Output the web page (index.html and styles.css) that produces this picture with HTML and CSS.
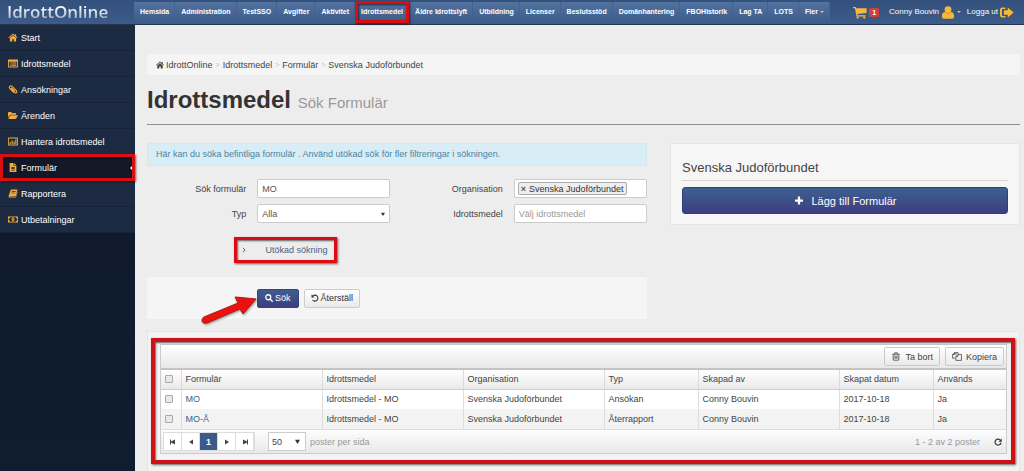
FILE: index.html
```html
<!DOCTYPE html>
<html lang="sv">
<head>
<meta charset="utf-8">
<title>IdrottOnline - Sök Formulär</title>
<link rel="stylesheet" href="styles.css">
</head>
<body>
<svg class="sprite" aria-hidden="true">
  <symbol id="home" viewBox="0 0 16 16"><path d="M8 1 0 8l1 1.200 7-6 7 6L16 8l-2.500-2.200V2h-2v2z"/><path d="M8 4.500 2.500 9v6h4v-4h3v4h4V9z"/></symbol>
  <symbol id="table" viewBox="0 0 18 16"><path fill-rule="evenodd" d="M1 1h16q1 0 1 1v12q0 1-1 1H1q-1 0-1-1V2q0-1 1-1zm.5 4v8.500h15V5zM3 6h2v1.500H3zm3 0h9v1.500H6zM3 8.500h2V10H3zm3 0h9V10H6zM3 11h2v1.500H3zm3 0h9v1.500H6z"/></symbol>
  <symbol id="clip" viewBox="0 0 16 16"><path d="m4 6 6.500 7q2 1.800 3.500.3t0-3.300L6.500 2.300Q4.500.5 2.500 2.200t-.2 4L9 13M5 4.500l6.500 7" fill="none" stroke="currentColor" stroke-width="2"/></symbol>
  <symbol id="folder" viewBox="0 0 18 16"><path d="M0 12V3q0-1.500 1.500-1.500h4L7 3.500h6q1.500 0 1.500 1.500v1.500H5Q3.500 6.500 2.500 8z"/><path d="M5 7.500h13l-3 5.500q-.7 1.500-2 1.500H.5l3-6q.5-1 1.500-1z"/></symbol>
  <symbol id="chart" viewBox="0 0 18 16"><path fill-rule="evenodd" d="M1 1h16q1 0 1 1v12q0 1-1 1H1q-1 0-1-1V2q0-1 1-1zm.5 1.500v11h15v-11zM3 9h2v3.500H3zm3.500-3h2v6.500h-2zM10 8h2v4.500h-2zm3.200-4h2v8.500h-2z"/></symbol>
  <symbol id="file" viewBox="0 0 16 16"><path fill-rule="evenodd" d="M2 0h7v5h5v11H2zm8 0 4 4h-4zM5 7v1.300h6V7zm0 2.500v1.300h6V9.500zM5 12v1.300h6V12z"/></symbol>
  <symbol id="book" viewBox="0 0 16 16"><path fill-rule="evenodd" d="M5.500 1H15q1.200 0 .8 1.300L13 12q-.4 1.200-1.500 1.200H3q-1 0-1 .6 0 .7 1 .7h9.500L15.700 5q.5.500.2 1.500L13.500 14q-.5 1.700-2 1.700H2.500Q0 15.500 0 13L3.500 2.500Q4 1 5.500 1zM6 4l-.4 1.200h7L13 4zm-.8 2.500-.4 1.200h7l.4-1.200z"/></symbol>
  <symbol id="money" viewBox="0 0 20 16"><path fill-rule="evenodd" d="M0 2h20v12H0zm4 1.500Q4 6 1.500 6v4Q4 10 4 12.500h12q0-2.500 2.500-2.500V6Q16 6 16 3.500zM10 4q3 0 3 4t-3 4-3-4 3-4zm-.8 2v4h1.600V6z"/></symbol>
  <symbol id="cart" viewBox="0 0 18 16"><path d="M0 1h3.500l.5 1.500h13.500v6L5.500 10l.5 1.500h10V13H4.500L2.500 2.500H0z"/><circle cx="6" cy="14.500" r="1.500"/><circle cx="14.500" cy="14.500" r="1.500"/></symbol>
  <symbol id="user" viewBox="0 0 16 16"><circle cx="8" cy="4.500" r="4.200"/><path d="M4 7.500Q8 11 12 7.500q3.500.5 3.500 5.500 0 2.700-2.500 2.700H3Q.5 15.700.5 13 .5 8 4 7.500z"/></symbol>
  <symbol id="signout" viewBox="0 0 18 16"><path d="M7 1.500V3.500H3.500Q2.500 3.500 2.500 4.500v7q0 1 1 1H7v2H3q-3 0-3-3v-7q0-3 3-3z"/><path d="M10 1.500 17.500 8 10 14.500V11H5V5h5z"/></symbol>
  <symbol id="search" viewBox="0 0 16 16"><circle cx="6.500" cy="6.500" r="5" fill="none" stroke="currentColor" stroke-width="2.600"/><path d="m10 10 4.500 4.500" stroke="currentColor" stroke-width="3" stroke-linecap="round"/></symbol>
  <symbol id="undo" viewBox="0 0 16 16"><path d="M3 4.500A6 6 0 1 1 3 12" fill="none" stroke="currentColor" stroke-width="2.200"/><path d="M1 1v6h6z"/></symbol>
  <symbol id="refresh" viewBox="0 0 16 16"><path d="M13 4.500A6 6 0 1 0 14 9.500" fill="none" stroke="currentColor" stroke-width="2.400"/><path d="M15.500 1v6.500H9z"/></symbol>
  <symbol id="plus" viewBox="0 0 16 16"><path d="M6 1h4v5h5v4h-5v5H6v-5H1V6h5z"/></symbol>
  <symbol id="trash" viewBox="0 0 16 16"><path d="M1.500 4h13M5.500 4V1.500h5V4M3 4v10.500h10V4M6 6.500v5.500M8 6.500v5.500m2-5.500v5.500" fill="none" stroke="currentColor" stroke-width="1.400"/></symbol>
  <symbol id="copy" viewBox="0 0 18 16"><path d="M7 4V1H4.500L1 4.500V11h5M4.500 1v3.500H1M10.500 4.500H17V15H7V8zv3.500H7M7 4v1M11 4V1H7" fill="none" stroke="currentColor" stroke-width="1.400"/></symbol>
  <symbol id="chevron" viewBox="0 0 16 16"><path d="m5 2 6 6-6 6" fill="none" stroke="currentColor" stroke-width="2.500"/></symbol>
  <symbol id="prev" viewBox="0 0 16 16"><path d="M12 3v10L4 8z"/></symbol>
  <symbol id="next" viewBox="0 0 16 16"><path d="M4 3v10l8-5z"/></symbol>
  <symbol id="first" viewBox="0 0 16 16"><path d="M2 3h2v4l8-4v10L4 9v4H2z"/></symbol>
  <symbol id="last" viewBox="0 0 16 16"><path d="M14 3h-2v4L4 3v10l8-4v4h2z"/></symbol>
</svg>

<header class="topbar">
  <a class="logo" href="#">IdrottOnline</a>
  <nav class="topnav">
    <a href="#">Hemsida</a><a href="#">Administration</a><a href="#">TestSSO</a><a href="#">Avgifter</a><a href="#">Aktivitet</a><a href="#" class="marked">Idrottsmedel<span class="mark mark-nav"></span></a><a href="#">Äldre Idrottslyft</a><a href="#">Utbildning</a><a href="#">Licenser</a><a href="#">Beslutsstöd</a><a href="#">Domänhantering</a><a href="#">FBOHistorik</a><a href="#">Lag TA</a><a href="#">LOTS</a><a href="#">Fler<i class="caret"></i></a>
  </nav>
  <div class="account">
    <a href="#" class="cart"><svg class="icon-lg"><use href="#cart"/></svg><span class="badge">1</span></a>
    <a href="#" class="user">Conny Bouvin<svg class="icon-lg"><use href="#user"/></svg><i class="caret"></i></a>
    <a href="#" class="logout">Logga ut<svg class="icon-lg"><use href="#signout"/></svg></a>
  </div>
</header>

<div class="shell">
  <aside class="sidebar">
    <nav>
      <a href="#"><svg class="icon"><use href="#home"/></svg>Start</a>
      <a href="#"><svg class="icon"><use href="#table"/></svg>Idrottsmedel</a>
      <a href="#"><svg class="icon"><use href="#clip"/></svg>Ansökningar</a>
      <a href="#"><svg class="icon"><use href="#folder"/></svg>Ärenden</a>
      <a href="#"><svg class="icon"><use href="#chart"/></svg>Hantera idrottsmedel</a>
      <a href="#" class="active marked"><svg class="icon"><use href="#file"/></svg>Formulär<i class="pointer"></i><span class="mark mark-side"></span></a>
      <a href="#"><svg class="icon"><use href="#book"/></svg>Rapportera</a>
      <a href="#"><svg class="icon"><use href="#money"/></svg>Utbetalningar</a>
    </nav>
  </aside>

  <main class="content">
    <nav class="breadcrumb">
      <a href="#"><svg class="icon-sm"><use href="#home"/></svg>IdrottOnline</a><span>&gt;</span><a href="#">Idrottsmedel</a><span>&gt;</span><a href="#">Formulär</a><span>&gt;</span><a href="#">Svenska Judoförbundet</a>
    </nav>
    <h1>Idrottsmedel <small>Sök Formulär</small></h1>

    <div class="columns">
      <section>
        <p class="alert">Här kan du söka befintliga formulär . Använd utökad sök för fler filtreringar i sökningen.</p>
        <form>
          <div class="fields">
            <label for="q">Sök formulär</label>
            <input id="q" type="text" value="MO">
            <label for="org">Organisation</label>
            <div class="tagbox"><span class="tag"><button type="button" aria-label="Ta bort">×</button>Svenska Judoförbundet</span><input id="org" type="text"></div>
            <label for="typ">Typ</label>
            <select id="typ"><option>Alla</option></select>
            <label for="medel">Idrottsmedel</label>
            <input id="medel" type="text" placeholder="Välj idrottsmedel">
            <button type="button" class="expand marked"><svg class="icon-xs"><use href="#chevron"/></svg>Utökad sökning<span class="mark mark-expand"></span></button>
          </div>
          <div class="actions">
            <svg class="arrow" viewBox="0 0 62 34"><path d="M4 26 38 12 35 6 56 8 43 23 40 18 7 32Q2 33 2 29 2 27 4 26z" fill="#ee100e" stroke="#a81a1a"/></svg>
            <button type="submit" class="btn primary"><svg class="icon-sm"><use href="#search"/></svg>Sök</button>
            <button type="reset" class="btn"><svg class="icon-sm"><use href="#undo"/></svg>Återställ</button>
          </div>
        </form>
      </section>
      <aside class="org">
        <h2>Svenska Judoförbundet</h2>
        <button type="button" class="add"><svg class="icon"><use href="#plus"/></svg>Lägg till Formulär</button>
      </aside>
    </div>

    <section class="results marked">
      <span class="mark mark-results"></span>
      <div class="grid">
        <div class="toolbar">
          <button type="button" class="btn"><svg class="icon"><use href="#trash"/></svg>Ta bort</button>
          <button type="button" class="btn"><svg class="icon"><use href="#copy"/></svg>Kopiera</button>
        </div>
        <table>
          <colgroup><col class="c-check"><col class="c-wide"><col class="c-wide"><col class="c-wide"><col class="c-mid"><col class="c-wide"><col class="c-mid"><col></colgroup>
          <thead><tr><th><input type="checkbox" aria-label="Markera alla"></th><th>Formulär</th><th>Idrottsmedel</th><th>Organisation</th><th>Typ</th><th>Skapad av</th><th>Skapat datum</th><th>Används</th></tr></thead>
          <tbody>
            <tr><td><input type="checkbox" aria-label="Markera MO"></td><td><a href="#">MO</a></td><td>Idrottsmedel - MO</td><td>Svenska Judoförbundet</td><td>Ansökan</td><td>Conny Bouvin</td><td>2017-10-18</td><td>Ja</td></tr>
            <tr><td><input type="checkbox" aria-label="Markera MO-Å"></td><td><a href="#">MO-Å</a></td><td>Idrottsmedel - MO</td><td>Svenska Judoförbundet</td><td>Återrapport</td><td>Conny Bouvin</td><td>2017-10-18</td><td>Ja</td></tr>
          </tbody>
        </table>
        <div class="pager">
          <div class="pages">
            <button type="button" aria-label="Första"><svg class="icon-sm"><use href="#first"/></svg></button><button type="button" aria-label="Föregående"><svg class="icon-sm"><use href="#prev"/></svg></button><button type="button" class="current">1</button><button type="button" aria-label="Nästa"><svg class="icon-sm"><use href="#next"/></svg></button><button type="button" aria-label="Sista"><svg class="icon-sm"><use href="#last"/></svg></button>
          </div>
          <select id="size"><option>50</option></select>
          <label for="size">poster per sida</label>
          <span class="count">1 - 2 av 2 poster</span>
          <button type="button" class="reload" aria-label="Uppdatera"><svg class="icon-sm"><use href="#refresh"/></svg></button>
        </div>
      </div>
    </section>
  </main>
</div>
</body>
</html>
```
FILE: styles.css
```css
* { box-sizing: border-box; }
body { margin: 0; min-height: 100vh; display: flex; flex-direction: column; background: #ededed; color: #444; font: 9px/12px "Liberation Sans", Arial, sans-serif; }
a { color: inherit; text-decoration: none; }
button, input, select { font: inherit; color: inherit; margin: 0; }
button { cursor: pointer; }
svg { fill: currentColor; flex: none; }
.sprite { position: absolute; width: 0; height: 0; }
.icon { width: 10px; height: 9px; }
.icon-sm { width: 8px; height: 8px; }
.icon-xs { width: 6px; height: 6px; }
.icon-lg { width: 14px; height: 13px; color: #f9b73a; }
.caret { display: inline-block; border: 2px solid transparent; border-top-color: #f9c04a; border-bottom: 0; margin-left: 2px; vertical-align: middle; }

/* Red highlight frames */
.marked { position: relative; }
.mark { position: absolute; z-index: 2; border: 3px solid #d90d12; box-shadow: 1px 1px 2px #0009, inset 1px 1px 2px #0009; pointer-events: none; }
.mark-nav { inset: -1px -1px -1px 0; }
.mark-side { inset: -1px 0 -1px 0; }
.mark-expand { inset: -1px; }
.mark-results { inset: 6px 4px 8px 3px; border-width: 4px; border-color: #cc1117; }

.topbar { display: flex; align-items: center; height: 25px; background: linear-gradient(#34517c, #3b5b89); border-bottom: 1px solid #26364f; color: #fff; }
.logo { width: 134px; flex: none; padding-left: 7px; font: 600 17px/24px "Open Sans", sans-serif; color: transparent; background: linear-gradient(#fff 30%, #9db0cc 80%); background-clip: text; }
.topnav { display: flex; flex: none; height: 20px; background: linear-gradient(#5272a0, #3d5c8a); font-size: 7px; font-weight: bold; line-height: 20px; }
.topnav a { padding: 0 5px 0 6px; border-right: 1px solid #43628f; white-space: nowrap; }
.account { display: flex; flex: 1; align-items: center; justify-content: flex-end; gap: 6px; padding-right: 10px; font-size: 8px; white-space: nowrap; }
.account a { display: flex; align-items: center; gap: 2px; }
.account .caret { margin-left: 0; }
.cart { margin-right: 4px; }
.badge { background: #c9423d; border-radius: 1px; padding: 0 3px; font-size: 7px; font-weight: bold; line-height: 9px; }

.shell { display: flex; flex: 1; }
.sidebar { width: 135px; flex: none; background: linear-gradient(#10182a, #0f1d31); color: #fff; }
.sidebar a { display: flex; align-items: center; gap: 3px; height: 26px; padding-left: 8px; background: #1d2b42; border-bottom: 1px solid #17233a; }
.sidebar .icon { color: #f2ab3c; }
.sidebar .active { background: #121826; }
.pointer { margin-left: auto; border: 3px solid transparent; border-right-color: #fff; border-left: 0; margin-right: 2px; }

.content { flex: 1; min-width: 0; padding: 29px 4px 0 12px; }
.breadcrumb { display: flex; align-items: center; gap: 3px; height: 21px; padding: 0 9px; background: #f5f5f5; }
.breadcrumb span { color: #bbb; font-size: 7px; }
.breadcrumb a { display: flex; align-items: center; gap: 2px; }
h1 { margin: 9px 0 18px; padding-bottom: 5px; border-bottom: 1px solid #8d8d8d; font-size: 24px; line-height: 32px; color: #333; }
h1 small { font-size: 15px; font-weight: normal; color: #999; }

.columns { display: grid; grid-template-columns: 500fr 350fr; gap: 23px; align-items: start; }
.alert { margin: 0; padding: 4px 8px; border: 1px solid #d0e8f0; background: #d9edf7; color: #4d83a0; line-height: 13px; }
.fields { display: grid; grid-template-columns: 99fr 133fr 101fr 133fr; gap: 6px 11px; align-items: center; padding: 13px 0 15px; }
.fields > label { text-align: right; }
.fields > input, .fields > select, .tagbox { width: 100%; min-width: 0; height: 19px; padding: 0 4px; border: 1px solid #ccc; border-radius: 2px; background: #fff; color: #555; }
.fields > input::placeholder { color: #999; }
select { appearance: none; }
.fields > select, .pager select { background: #fff url("data:image/svg+xml,%3Csvg xmlns='http://www.w3.org/2000/svg' viewBox='0 0 6 6'%3E%3Cpath d='M0 1h6L3 6z' fill='%23333'/%3E%3C/svg%3E") no-repeat right 4px center / 4px 4px; }
.tagbox { display: flex; align-items: center; padding: 0 3px; }
.tag { display: flex; align-items: center; flex: none; gap: 3px; height: 13px; padding: 0 2px; border: 1px solid #aaa; border-radius: 2px; background: #eee; color: #333; }
.tag button { padding: 0; border: 0; background: none; color: #555; font-weight: bold; }
.tagbox input { flex: 1; width: 0; min-width: 0; border: 0; padding: 0; outline: 0; background: none; }
.expand { grid-column: 1 / 3; justify-self: end; display: flex; align-items: center; gap: 18px; height: 24px; margin: 9px 54px 0 0; padding: 0 9px 0 6px; border: 0; background: none; color: #4a5f85; white-space: nowrap; }
.expand svg { color: #555; }
.actions { position: relative; display: flex; align-items: center; gap: 5px; height: 42px; padding-left: 22%; background: #f5f5f5; }
.arrow { position: absolute; left: 53px; top: 14px; width: 62px; height: 34px; filter: drop-shadow(1px 1px 1px #0006); }
.btn { display: flex; align-items: center; gap: 2px; height: 19px; padding: 0 6px; border: 1px solid #ccc; border-radius: 2px; background: linear-gradient(#fff, #eaeaea); color: #333; }
.primary { padding: 0 7px; border-color: #34457d; background: linear-gradient(#3f5c8f, #3c3f80); color: #fff; }

.org { padding: 16px 11px 10px; border: 1px solid #e6e6e6; background: #f6f6f6; }
.org h2 { margin: 0 0 6px; padding-bottom: 4px; border-bottom: 1px solid #d8d5cb; font-size: 13px; font-weight: normal; line-height: 16px; }
.add { display: flex; align-items: center; justify-content: center; gap: 8px; width: 100%; height: 27px; border: 1px solid #373c78; border-radius: 3px; background: linear-gradient(#3d6090, #3e3d80); color: #fff; font-size: 11px; }

.results { margin-top: 12px; padding: 12px 12px 18px; border: 1px solid #e6e6e6; border-bottom: 0; background: #f3f3f3; }
.grid { border: 1px solid #ccc; background: #fff; }
.toolbar { display: flex; align-items: center; justify-content: flex-end; gap: 5px; height: 25px; padding-right: 2px; border-bottom: 2px solid #c4c4c4; background: linear-gradient(#fff, #e8e8e8); }
.toolbar .btn { gap: 4px; color: #444; }
table { width: 100%; border-collapse: collapse; table-layout: fixed; }
.c-check { width: 20px; }
.c-wide { width: 141px; }
.c-mid { width: 94px; }
th, td { height: 20px; padding: 0 4px; text-align: left; font-weight: normal; border-left: 1px solid #ddd; white-space: nowrap; }
th { height: 19px; background: linear-gradient(#fff, #e9e9e9); border-bottom: 1px solid #ccc; }
th:first-child, td:first-child { border-left: 0; }
tbody tr:nth-child(2) { background: #f3f3f3; }
td a { color: #41628f; }
td input, th input { display: block; appearance: none; width: 8px; height: 8px; border: 1px solid #aaa; border-radius: 1px; background: #e8e8e8; }
.pager { display: flex; align-items: center; height: 24px; padding: 0 4px 0 2px; border-top: 1px solid #ddd; background: linear-gradient(#fdfdfd, #e9e9e9); color: #999; }
.pages { display: flex; border: 1px solid #ddd; background: #fff; }
.pages button { display: grid; place-items: center; width: 18px; height: 17px; padding: 0; border: 0; border-right: 1px solid #ddd; background: none; color: #444; }
.pages .current { background: #3d5a88; color: #fff; font-weight: bold; }
.pager select { width: 38px; height: 19px; margin: 0 4px 0 13px; padding-left: 3px; border: 1px solid #ccc; color: #444; background-position: right 5px center; background-size: 5px 5px; }
.count { margin-left: auto; }
.reload { display: flex; margin-left: 14px; padding: 0; border: 0; background: none; color: #333; }
```
